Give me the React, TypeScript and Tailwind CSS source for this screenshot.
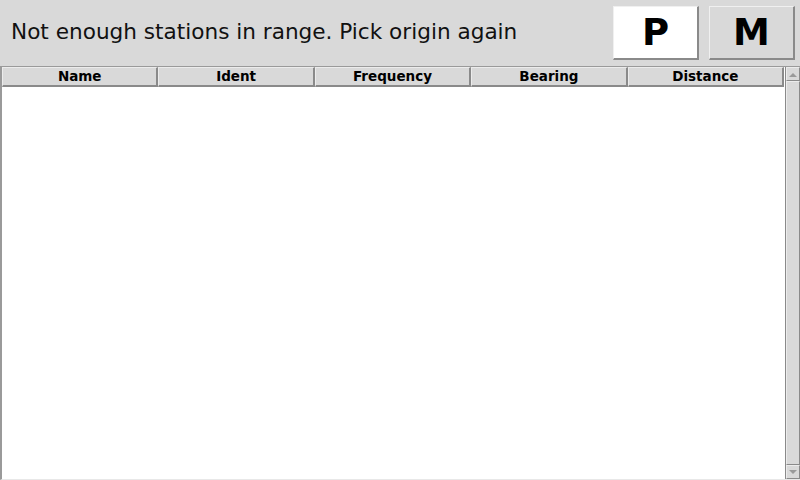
import React from "react";

const cols = ["Name", "Ident", "Frequency", "Bearing", "Distance"];

export default function App() {
  return (
    <div
      className="w-[800px] h-[480px] bg-[#d9d9d9] flex flex-col overflow-hidden"
      style={{ fontFamily: '"DejaVu Sans", sans-serif' }}
    >
      <div className="h-[66px] flex items-start shrink-0">
        <div className="h-[66px] flex items-center pl-[11px] text-[21.6px] text-[#111] flex-1 pb-[1px]">
          Not enough stations in range. Pick origin again
        </div>
        <div className="flex gap-[10px] pt-[6px] pr-[5px]">
          <div className="w-[86px] h-[54px] bg-white border-t border-l border-[#f0f0f0] border-r-2 border-b-2 border-r-[#8a8a8a] border-b-[#8a8a8a] flex items-center justify-center text-[37px] font-bold text-black">
            P
          </div>
          <div className="w-[86px] h-[54px] bg-[#d9d9d9] border-t border-l border-[#f0f0f0] border-r-2 border-b-2 border-r-[#8a8a8a] border-b-[#8a8a8a] flex items-center justify-center text-[37px] font-bold text-black">
            M
          </div>
        </div>
      </div>
      <div className="flex-1 flex border-t border-l-2 border-t-[#9a9a9a] border-l-[#9a9a9a] border-b border-b-[#e8e8e8]">
        <div className="flex-1 bg-white flex flex-col">
          <div className="flex h-[20px]">
            {cols.map((c) => (
              <div
                key={c}
                className="flex-1 bg-[#d9d9d9] border-t border-l border-t-[#ececec] border-l-[#ececec] border-r-2 border-b-2 border-r-[#8a8a8a] border-b-[#8a8a8a] flex items-center justify-center text-[13.5px] font-bold text-black leading-none"
              >
                {c}
              </div>
            ))}
            <div className="w-[1px] bg-white" />
          </div>
        </div>
        <div className="w-[15px] bg-[#d9d9d9] flex flex-col border-l border-l-[#8a8a8a]">
          <div className="h-[14px] border-t border-l border-[#ececec] border-r border-b border-r-[#8a8a8a] border-b-[#8a8a8a] flex items-center justify-center">
            <svg width="8" height="5" viewBox="0 0 8 5">
              <polygon points="0,5 8,5 4,1" fill="#9a9a9a" />
            </svg>
          </div>
          <div className="flex-1 border-t border-l border-[#ececec] border-r border-b border-r-[#8a8a8a] border-b-[#8a8a8a]" />
          <div className="h-[14px] border-t border-l border-[#ececec] border-r border-b border-r-[#8a8a8a] border-b-[#8a8a8a] flex items-center justify-center">
            <svg width="8" height="5" viewBox="0 0 8 5">
              <polygon points="0,0 8,0 4,4" fill="#9a9a9a" />
            </svg>
          </div>
        </div>
      </div>
    </div>
  );
}
